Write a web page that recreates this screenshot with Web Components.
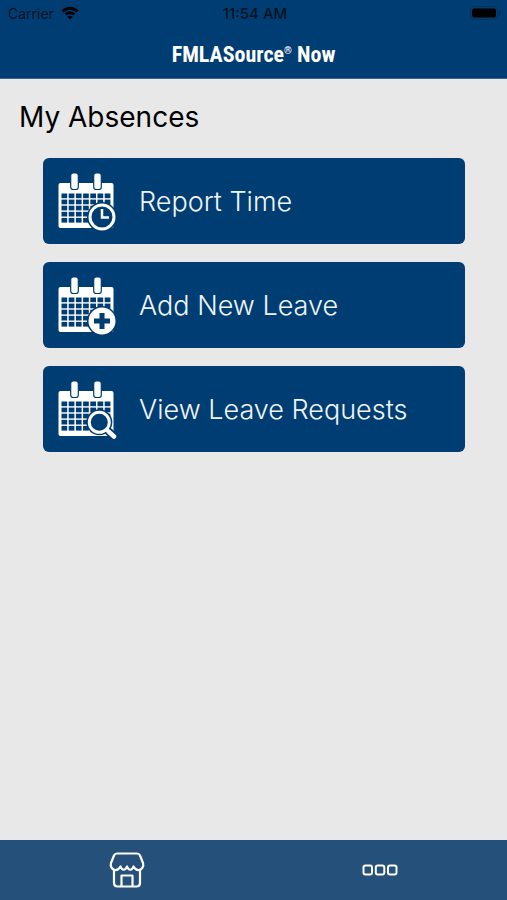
<!DOCTYPE html>
<html lang="en">
<head>
<meta charset="utf-8">
<meta name="viewport" content="width=device-width, initial-scale=1">
<title>FMLASource Now</title>
<style>
	html, body {
		height: 100%;
	}
	body {
		--brand: #003d73;
		--brand-light: #24507a;
		margin: 0;
		background: #e8e8e8;
		font-family: Inter, "Liberation Sans", sans-serif;
	}
</style>
</head>
<body>
<app-shell>
	<status-bar slot="top" carrier="Carrier" time="11:54 AM"></status-bar>
	<title-bar slot="top">FMLASource<sup>®</sup> Now</title-bar>
	<absence-menu heading="My Absences">
		<menu-button icon="clock">Report Time</menu-button>
		<menu-button icon="plus">Add New Leave</menu-button>
		<menu-button icon="search">View Leave Requests</menu-button>
	</absence-menu>
	<tab-bar slot="bottom"></tab-bar>
</app-shell>

<script>
function render(element, html) {
	const template = document.createElement('template');
	template.innerHTML = html;
	element.attachShadow({ mode: 'open' });
	element.shadowRoot.appendChild(template.content.cloneNode(true));
}

class AppShell extends HTMLElement {
	constructor() {
		super();
		render(this, `
<style>
	:host { display: flex; flex-direction: column; min-height: 100vh; }
	header { background: var(--brand); }
	main { flex: 1; }
</style>
<header><slot name="top"></slot></header>
<main><slot></slot></main>
<slot name="bottom"></slot>`);
	}
}

class StatusBar extends HTMLElement {
	constructor() {
		super();
		render(this, `
<style>
	:host {
		display: grid;
		grid-template-columns: 1fr auto 1fr;
		align-items: center;
		height: 26px;
		padding: 0 5px 0 8px;
		color: #05121f;
		font-size: 14px;
	}
	.carrier { display: flex; align-items: center; gap: 7px; }
	.time { font-size: 15px; font-weight: 500; }
	.battery { justify-self: end; }
	svg { display: block; }
</style>
<div class="carrier">
	<span class="name"></span>
	<svg width="18" height="14" viewBox="0 0 18 14" fill="none" stroke="#000" stroke-width="3">
		<path d="M1.5 5.5C6 1.2 12 1.2 16.5 5.5"/>
		<path d="M4.6 8.5C7.2 6.2 10.8 6.2 13.4 8.5"/>
		<path d="M9 13.5L6.3 10.8C7.8 9.4 10.2 9.4 11.7 10.8Z" fill="#000" stroke="none"/>
	</svg>
</div>
<span class="time"></span>
<svg class="battery" width="32" height="14" viewBox="0 0 32 14">
	<rect x="0.5" y="0.5" width="27" height="13" rx="4" fill="none" stroke="#0a3157"/>
	<rect x="2" y="2.5" width="24" height="9" rx="2" fill="#000"/>
	<path d="M29 4.5c2 .6 2 4.4 0 5z" fill="#0a3157"/>
</svg>`);
		this.shadowRoot.querySelector('.name').textContent = this.getAttribute('carrier');
		this.shadowRoot.querySelector('.time').textContent = this.getAttribute('time');
	}
}

class TitleBar extends HTMLElement {
	constructor() {
		super();
		render(this, `
<style>
	:host { display: block; padding: 17px 0 11px; border-bottom: 1px solid #376791; }
	h1 {
		margin: 0;
		color: #fff;
		font: bold 22px/24px "Roboto Condensed", "Liberation Sans Narrow", "Liberation Sans", sans-serif;
		text-align: center;
	}
	::slotted(sup) { font-size: 10px; line-height: 0; }
</style>
<h1><slot></slot></h1>`);
	}
}

class AbsenceMenu extends HTMLElement {
	constructor() {
		super();
		render(this, `
<style>
	:host { display: block; padding: 20px 19px; }
	h2 { margin: 0; font-size: 28px; font-weight: 400; line-height: 36px; color: #000; }
	nav { display: grid; gap: 18px; padding: 23px 23px 0 24px; }
</style>
<h2></h2>
<nav><slot></slot></nav>`);
		this.shadowRoot.querySelector('h2').textContent = this.getAttribute('heading');
	}
}

// Small symbols laid over the lower right corner of the calendar
const badges = {
	clock: `
		<circle cx="45" cy="45" r="15" fill="#003d73"/>
		<circle cx="45" cy="45" r="12" fill="#003d73" stroke="#fff" stroke-width="3"/>
		<path d="M45 37V45.5H52" fill="none" stroke="#fff" stroke-width="2.5"/>`,
	plus: `
		<circle cx="45" cy="45" r="15" fill="#003d73"/>
		<circle cx="45" cy="45" r="13.5" fill="#fff"/>
		<path d="M45 37V53M37 45H53" stroke="#003d73" stroke-width="5"/>`,
	search: `
		<path d="M50 50L57 56.5" stroke="#003d73" stroke-width="8" stroke-linecap="round"/>
		<circle cx="42.3" cy="42.3" r="13" fill="#003d73"/>
		<circle cx="42.3" cy="42.3" r="10" fill="#003d73" stroke="#fff" stroke-width="3"/>
		<path d="M49.5 49.5L51.5 51.5" stroke="#fff" stroke-width="3"/>
		<path d="M51.5 51.5L57 56.5" stroke="#fff" stroke-width="4.5" stroke-linecap="round"/>`
};

function calendarIcon(badge) {
	let cells = '';
	for (let row = 0; row < 5; row++) {
		for (let col = 0; col < 7; col++) {
			cells += `<rect x="${4.5 + col * 7.2}" y="${21.5 + row * 6.1}" width="5.7" height="4.7"/>`;
		}
	}
	return `
<svg width="60" height="60" viewBox="0 0 60 60" aria-hidden="true">
	<rect x="1.5" y="11" width="55" height="45" rx="2" fill="#fff"/>
	<g fill="#003d73">${cells}</g>
	<g fill="#fff" stroke="#003d73" stroke-width="1.2">
		<rect x="13.7" y="1" width="7.6" height="16.5" rx="2.5"/>
		<rect x="36.7" y="1" width="7.6" height="16.5" rx="2.5"/>
	</g>
	${badges[badge]}
</svg>`;
}

class MenuButton extends HTMLElement {
	constructor() {
		super();
		render(this, `
<style>
	:host { display: block; }
	button {
		display: flex;
		align-items: center;
		gap: 22px;
		width: 100%;
		min-height: 86px;
		padding: 2px 14px 0;
		border: 0;
		border-radius: 6px;
		background: var(--brand);
		color: #f0f5fa;
		font: 300 27px/36px Inter, "Liberation Sans", sans-serif;
		text-align: left;
		cursor: pointer;
	}
	svg { flex: none; }
</style>
<button type="button">${calendarIcon(this.getAttribute('icon'))}<span><slot></slot></span></button>`);
	}
}

class TabBar extends HTMLElement {
	constructor() {
		super();
		render(this, `
<style>
	:host { display: block; background: var(--brand-light); }
	nav { display: grid; grid-template-columns: 1fr 1fr; height: 60px; }
	button {
		display: grid;
		place-items: center;
		padding: 0;
		border: 0;
		background: none;
		color: #fff;
		cursor: pointer;
	}
</style>
<nav>
	<button type="button" aria-label="Home">
		<svg width="36" height="36" viewBox="0 0 36 36" fill="none" stroke="currentColor" stroke-width="2.2" stroke-linejoin="round" stroke-linecap="round">
			<path d="M8 1.5H28C29.5 1.5 30.3 2 31 3.5L34 11C35 14.5 33 17.5 30 18C27.5 18.3 25.5 16.5 24.5 14.5C23 18.8 19.5 18.8 18 14.5C16.5 18.8 13 18.8 11.5 14.5C10.5 16.5 8.5 18.3 6 18C3 17.5 1 14.5 2 11L5 3.5C5.7 2 6.5 1.5 8 1.5Z"/>
			<path d="M5 18V31C5 33.5 6 34.5 8.5 34.5H27.5C30 34.5 31 33.5 31 31V18"/>
			<path d="M12.5 34V23.5H23.5V34"/>
		</svg>
	</button>
	<button type="button" aria-label="More">
		<svg width="36" height="12" viewBox="0 0 36 12" fill="none" stroke="currentColor" stroke-width="2">
			<rect x="1.5" y="1.5" width="8.5" height="9" rx="2"/>
			<rect x="13.8" y="1.5" width="8.5" height="9" rx="2"/>
			<rect x="26" y="1.5" width="8.5" height="9" rx="2"/>
		</svg>
	</button>
</nav>`);
	}
}

window.customElements.define('app-shell', AppShell);
window.customElements.define('status-bar', StatusBar);
window.customElements.define('title-bar', TitleBar);
window.customElements.define('absence-menu', AbsenceMenu);
window.customElements.define('menu-button', MenuButton);
window.customElements.define('tab-bar', TabBar);
</script>
</body>
</html>
